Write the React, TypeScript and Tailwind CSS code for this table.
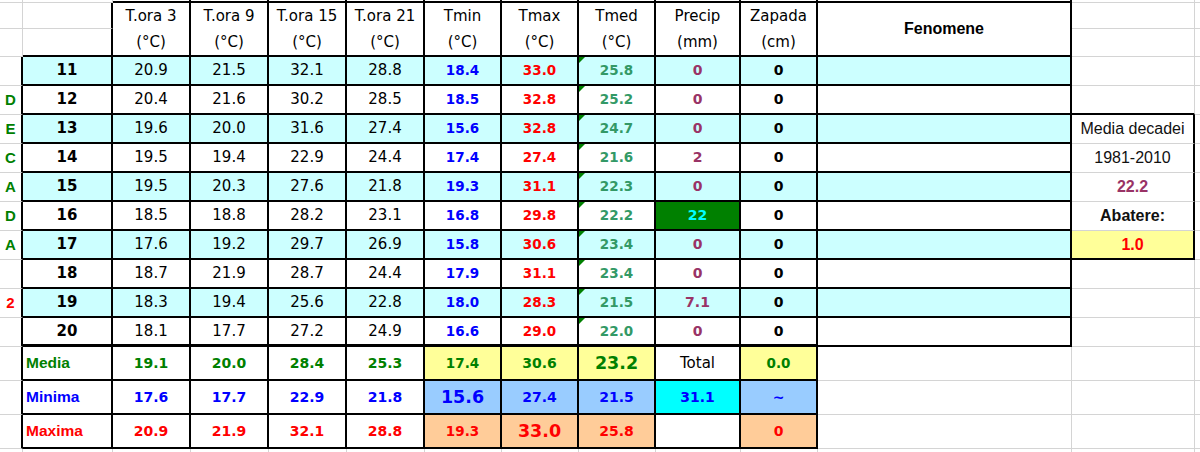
import React from "react";

const RG = "border-r border-r-[#d4d4d4]";
const RK = "border-r-2 border-r-black";
const BG = "border-b border-b-[#d4d4d4]";
const BK = "border-b-2 border-b-black";
const BK3 = "border-b-[3px] border-b-black";
const CELL = "relative flex items-center justify-center overflow-hidden whitespace-nowrap";
const DV = "font-['DejaVu_Sans',sans-serif]";
const AR = "font-['Liberation_Sans',Arial,sans-serif]";

type Row = {
  d: number;
  l: string;
  red?: boolean;
  t: string[];
  mn: string;
  mx: string;
  md: string;
  p: string;
  z: string;
};

const rows: Row[] = [
  { d: 11, l: "", t: ["20.9", "21.5", "32.1", "28.8"], mn: "18.4", mx: "33.0", md: "25.8", p: "0", z: "0" },
  { d: 12, l: "D", t: ["20.4", "21.6", "30.2", "28.5"], mn: "18.5", mx: "32.8", md: "25.2", p: "0", z: "0" },
  { d: 13, l: "E", t: ["19.6", "20.0", "31.6", "27.4"], mn: "15.6", mx: "32.8", md: "24.7", p: "0", z: "0" },
  { d: 14, l: "C", t: ["19.5", "19.4", "22.9", "24.4"], mn: "17.4", mx: "27.4", md: "21.6", p: "2", z: "0" },
  { d: 15, l: "A", t: ["19.5", "20.3", "27.6", "21.8"], mn: "19.3", mx: "31.1", md: "22.3", p: "0", z: "0" },
  { d: 16, l: "D", t: ["18.5", "18.8", "28.2", "23.1"], mn: "16.8", mx: "29.8", md: "22.2", p: "22", z: "0" },
  { d: 17, l: "A", t: ["17.6", "19.2", "29.7", "26.9"], mn: "15.8", mx: "30.6", md: "23.4", p: "0", z: "0" },
  { d: 18, l: "", t: ["18.7", "21.9", "28.7", "24.4"], mn: "17.9", mx: "31.1", md: "23.4", p: "0", z: "0" },
  { d: 19, l: "2", red: true, t: ["18.3", "19.4", "25.6", "22.8"], mn: "18.0", mx: "28.3", md: "21.5", p: "7.1", z: "0" },
  { d: 20, l: "", t: ["18.1", "17.7", "27.2", "24.9"], mn: "16.6", mx: "29.0", md: "22.0", p: "0", z: "0" },
];

const headers: [string, string][] = [
  ["T.ora 3", "(°C)"],
  ["T.ora 9", "(°C)"],
  ["T.ora 15", "(°C)"],
  ["T.ora 21", "(°C)"],
  ["Tmin", "(°C)"],
  ["Tmax", "(°C)"],
  ["Tmed", "(°C)"],
  ["Precip", "(mm)"],
  ["Zapada", "(cm)"],
];

function RightCell({ i }: { i: number }) {
  switch (i) {
    case 1:
      return <div className={`${CELL} ${RG} ${BK}`} />;
    case 2:
      return <div className={`${CELL} ${RK} ${BG} ${AR} text-[16px] text-[#111]`}>Media decadei</div>;
    case 3:
      return <div className={`${CELL} ${RK} ${BG} ${AR} text-[16px] text-[#111]`}>1981-2010</div>;
    case 4:
      return <div className={`${CELL} ${RK} ${BG} ${AR} text-[16px] font-bold text-[#993366]`}>22.2</div>;
    case 5:
      return <div className={`${CELL} ${RK} ${BG} ${AR} text-[16px] font-bold text-[#111]`}>Abatere:</div>;
    case 6:
      return <div className={`${CELL} ${RK} ${BK} ${AR} bg-[#ffff99] text-[16px] font-bold text-[#ff0000]`}>1.0</div>;
    default:
      return <div className={`${CELL} ${RG} ${BG}`} />;
  }
}

function DataRow({ r, i }: { r: Row; i: number }) {
  const bg = i % 2 === 0 ? "bg-[#ccffff]" : "bg-white";
  const bb = i === 9 ? BK3 : BK;
  return (
    <>
      <div className={`${CELL} ${RK} ${BG} ${AR} text-[15px] font-bold ${r.red ? "text-[#ff0000]" : "text-[#008000]"}`}>{r.l}</div>
      <div className={`${CELL} ${RK} ${bb} ${bg} ${DV} text-[15px] font-bold text-black`}>{r.d}</div>
      {r.t.map((v, k) => (
        <div key={k} className={`${CELL} ${RK} ${bb} ${bg} ${DV} text-[15px] text-black`}>{v}</div>
      ))}
      <div className={`${CELL} ${RK} ${bb} ${bg} ${DV} text-[13.5px] font-bold text-[#0000ff]`}>{r.mn}</div>
      <div className={`${CELL} ${RK} ${bb} ${bg} ${DV} text-[13.5px] font-bold text-[#ff0000]`}>{r.mx}</div>
      <div className={`${CELL} ${RK} ${bb} ${bg} ${DV} text-[13.5px] font-bold text-[#339966]`}>
        <span className="absolute left-0 top-0 h-0 w-0 border-t-[6px] border-r-[6px] border-t-[#008000] border-r-transparent" />
        {r.md}
      </div>
      {r.p === "22" ? (
        <div className={`${CELL} ${RK} ${bb} bg-[#008000] ${DV} text-[14px] font-bold text-[#00ffff]`}>{r.p}</div>
      ) : (
        <div className={`${CELL} ${RK} ${bb} ${bg} ${DV} text-[14px] font-bold text-[#993366]`}>{r.p}</div>
      )}
      <div className={`${CELL} ${RK} ${bb} ${bg} ${DV} text-[14px] font-bold text-black`}>{r.z}</div>
      <div className={`${CELL} ${RK} ${BK} ${bg}`} />
      <RightCell i={i} />
      <div className={`${CELL} ${BG}`} />
    </>
  );
}

export default function App() {
  return (
    <div className="h-[452px] w-[1200px] overflow-hidden bg-white">
      <div className="grid grid-cols-[23px_90px_78px_78px_78px_78px_77px_77px_77px_85px_77px_254px_123px_5px] grid-rows-[3px_26px_28px_repeat(10,29px)_repeat(3,34px)_3px]">
        {/* top strip */}
        <div className={`${RG} ${BG}`} />
        <div className={`${RG} ${BG}`} />
        {Array.from({ length: 10 }).map((_, k) => (
          <div key={`ts${k}`} className={`${RK} ${BK}`} />
        ))}
        <div className={`${RG} ${BG}`} />
        <div className={`${BG}`} />

        {/* header row 1 */}
        <div className={`${RG} ${BG}`} />
        <div className={`${RK} ${BG}`} />
        {headers.map((h, k) => (
          <div key={`h1${k}`} className={`${CELL} ${RK} ${DV} text-[15px] text-black`}>{h[0]}</div>
        ))}
        <div className={`${CELL} row-span-2 ${RK} ${BK} ${AR} text-[16px] font-bold text-black`}>Fenomene</div>
        <div className={`${RG} ${BG}`} />
        <div className={`${BG}`} />

        {/* header row 2 */}
        <div className={`${RG} ${BG}`} />
        <div className={`${RK} ${BK}`} />
        {headers.map((h, k) => (
          <div key={`h2${k}`} className={`${CELL} ${RK} ${BK} ${DV} text-[15px] text-black`}>{h[1]}</div>
        ))}
        <div className={`${RG} ${BG}`} />
        <div className={`${BG}`} />

        {rows.map((r, i) => (
          <DataRow key={r.d} r={r} i={i} />
        ))}

        {/* Media */}
        <div className={`${RK} ${BG}`} />
        <div className={`${CELL} !justify-start pl-[3px] ${RK} ${BK} ${AR} text-[15.5px] font-bold text-[#008000]`}>Media</div>
        {["19.1", "20.0", "28.4", "25.3"].map((v) => (
          <div key={`me${v}`} className={`${CELL} ${RK} ${BK} ${DV} text-[14px] font-bold text-[#008000]`}>{v}</div>
        ))}
        <div className={`${CELL} ${RK} ${BK} bg-[#ffff99] ${DV} text-[13.5px] font-bold text-[#008000]`}>17.4</div>
        <div className={`${CELL} ${RK} ${BK} bg-[#ffff99] ${DV} text-[14px] font-bold text-[#008000]`}>30.6</div>
        <div className={`${CELL} ${RK} ${BK} bg-[#ffff99] ${DV} text-[17.5px] font-bold text-[#008000]`}>23.2</div>
        <div className={`${CELL} ${RK} ${BK} ${DV} text-[15px] text-black`}>Total</div>
        <div className={`${CELL} ${RK} ${BK} bg-[#ffff99] ${DV} text-[13.5px] font-bold text-[#008000]`}>0.0</div>
        <div className={`${RG} ${BG}`} />
        <div className={`${RG} ${BG}`} />
        <div className={`${BG}`} />

        {/* Minima */}
        <div className={`${RK} ${BG}`} />
        <div className={`${CELL} !justify-start pl-[3px] ${RK} ${BK} ${AR} text-[15.5px] font-bold text-[#0000ff]`}>Minima</div>
        {["17.6", "17.7", "22.9", "21.8"].map((v) => (
          <div key={`mi${v}`} className={`${CELL} ${RK} ${BK} ${DV} text-[14px] font-bold text-[#0000ff]`}>{v}</div>
        ))}
        <div className={`${CELL} ${RK} ${BK} bg-[#99ccff] ${DV} text-[17.5px] font-bold text-[#0000ff]`}>15.6</div>
        <div className={`${CELL} ${RK} ${BK} bg-[#99ccff] ${DV} text-[14px] font-bold text-[#0000ff]`}>27.4</div>
        <div className={`${CELL} ${RK} ${BK} bg-[#99ccff] ${DV} text-[14px] font-bold text-[#0000ff]`}>21.5</div>
        <div className={`${CELL} ${RK} ${BK} bg-[#00ffff] ${DV} text-[14px] font-bold text-[#0000ff]`}>31.1</div>
        <div className={`${CELL} ${RK} ${BK} bg-[#99ccff] ${DV} text-[14px] font-bold text-[#0000ff]`}>~</div>
        <div className={`${RG} ${BG}`} />
        <div className={`${RG} ${BG}`} />
        <div className={`${BG}`} />

        {/* Maxima */}
        <div className={`${RK} ${BG}`} />
        <div className={`${CELL} !justify-start pl-[3px] ${RK} ${BK} ${AR} text-[15.5px] font-bold text-[#ff0000]`}>Maxima</div>
        {["20.9", "21.9", "32.1", "28.8"].map((v) => (
          <div key={`mx${v}`} className={`${CELL} ${RK} ${BK} ${DV} text-[14px] font-bold text-[#ff0000]`}>{v}</div>
        ))}
        <div className={`${CELL} ${RK} ${BK} bg-[#ffcc99] ${DV} text-[13.5px] font-bold text-[#ff0000]`}>19.3</div>
        <div className={`${CELL} ${RK} ${BK} bg-[#ffcc99] ${DV} text-[17.5px] font-bold text-[#ff0000]`}>33.0</div>
        <div className={`${CELL} ${RK} ${BK} bg-[#ffcc99] ${DV} text-[14px] font-bold text-[#ff0000]`}>25.8</div>
        <div className={`${CELL} ${RK} ${BK}`} />
        <div className={`${CELL} ${RK} ${BK} bg-[#ffcc99] ${DV} text-[14px] font-bold text-[#ff0000]`}>0</div>
        <div className={`${RG} ${BG}`} />
        <div className={`${RG} ${BG}`} />
        <div className={`${BG}`} />

        {/* bottom strip */}
        {Array.from({ length: 13 }).map((_, k) => (
          <div key={`bs${k}`} className={`${RG}`} />
        ))}
        <div />
      </div>
    </div>
  );
}
